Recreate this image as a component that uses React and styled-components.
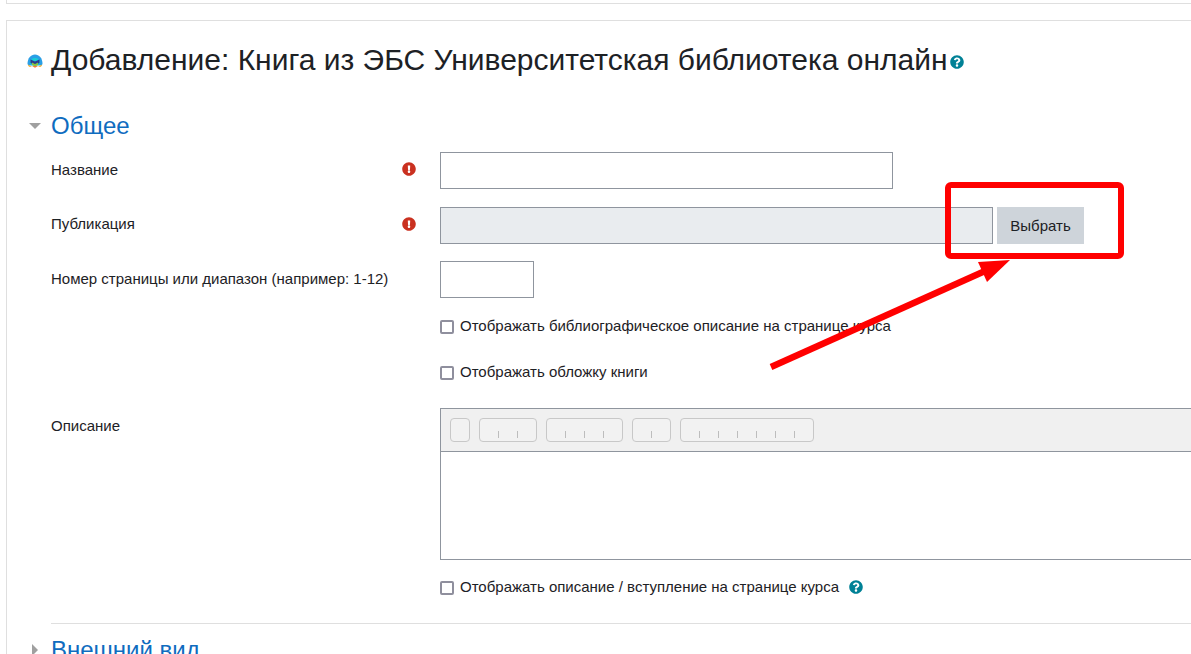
import React from 'react';
import styled, { createGlobalStyle } from 'styled-components';
import { FaQuestionCircle, FaExclamationCircle } from 'react-icons/fa';

const GlobalStyle = createGlobalStyle`
  html, body {
    margin: 0;
    padding: 0;
    background: #fff;
    overflow: hidden;
  }
  body {
    font-family: "Liberation Sans", Arial, sans-serif;
    color: #1d2125;
  }
`;

const Page = styled.div`
  position: relative;
  width: 1191px;
  height: 654px;
  overflow: hidden;
  padding-left: 6px;
  box-sizing: border-box;
`;

const TopCard = styled.div`
  width: 1300px;
  height: 4px;
  box-sizing: border-box;
  border-left: 1px solid #dfdfdf;
  border-bottom: 1px solid #dfdfdf;
`;

const MainCard = styled.main`
  width: 1300px;
  margin-top: 16px;
  box-sizing: border-box;
  border-left: 1px solid #dfdfdf;
  border-top: 1px solid #dfdfdf;
  padding: 20px 0 0 20px;
`;

const Heading = styled.div`
  display: flex;
  align-items: center;
  height: 40px;
  margin-bottom: 30px;
`;

const Title = styled.h2`
  margin: -2px 2px 0 8px;
  font-size: 30px;
  font-weight: 400;
  line-height: 40px;
  color: #1d2125;
  white-space: nowrap;
`;

const HelpIcon = styled(FaQuestionCircle)`
  width: 14px;
  height: 14px;
  color: #008196;
  flex: none;
  margin-left: ${p => p.$offset || 0}px;
  position: relative;
  top: ${p => p.$drop ?? 1}px;
`;

const SectionHeader = styled.div`
  display: flex;
  align-items: center;
  height: 30px;
  margin-top: ${p => p.$top || 0}px;
`;

const Caret = styled.span`
  flex: none;
  width: 0;
  height: 0;
  ${p => p.$open
    ? `
      margin: 0 10px 0 2px;
      border-left: 6px solid transparent;
      border-right: 6px solid transparent;
      border-top: 6px solid #a0a0a0;
    `
    : `
      margin: 0 13px 0 5px;
      border-top: 6px solid transparent;
      border-bottom: 6px solid transparent;
      border-left: 6px solid #a0a0a0;
    `}
`;

const SectionTitle = styled.h3`
  margin: 0;
  font-size: 24px;
  font-weight: 400;
  line-height: 30px;
  color: #0f6cbf;
`;

const Fields = styled.div`
  margin: 11px 0 0 24px;
`;

const Row = styled.div`
  display: grid;
  grid-template-columns: 351px 38px 1fr;
  margin-bottom: ${p => p.$gap ?? 17}px;
  min-height: ${p => p.$height || 37}px;
`;

const Label = styled.label`
  font-size: 15px;
  line-height: 22px;
  padding-top: ${p => p.$pad ?? 7}px;
  white-space: nowrap;
`;

const IconCell = styled.div`
  padding-top: 10px;
  line-height: 0;
`;

const RequiredIcon = styled(FaExclamationCircle)`
  width: 14px;
  height: 14px;
  color: #ca3120;
`;

const Control = styled.div`
  display: flex;
  gap: 4px;
  align-items: flex-start;
`;

const TextInput = styled.div`
  width: ${p => p.$width}px;
  height: 37px;
  box-sizing: border-box;
  border: 1px solid #8f959e;
  background: ${p => (p.$disabled ? '#e9ecef' : '#fff')};
`;

const PickButton = styled.button`
  width: 87px;
  height: 37px;
  padding: 0;
  border: none;
  background: #ced4da;
  color: #1d2125;
  font-family: inherit;
  font-size: 15px;
`;

const CheckLine = styled.label`
  display: flex;
  align-items: center;
  height: 22px;
  font-size: 15px;
  white-space: nowrap;
`;

const CheckText = styled.span`
  margin-top: -2px;
`;

const CheckBox = styled.span`
  flex: none;
  width: 14px;
  height: 14px;
  box-sizing: border-box;
  margin: 1px 6px 0 0;
  border: 2px solid #8f8f9d;
  border-radius: 2px;
  background: #fff;
`;

const Editor = styled.div`
  width: 900px;
  height: 152px;
  box-sizing: border-box;
  border: 1px solid #8f959e;
`;

const Toolbar = styled.div`
  display: flex;
  gap: 9px;
  height: 43px;
  box-sizing: border-box;
  padding: 9px 0 0 9px;
  background: #f0f0f0;
  border-bottom: 1px solid #8f959e;
`;

const ToolGroup = styled.div`
  display: flex;
  height: 24px;
  box-sizing: border-box;
  border: 1px solid #c8c8c8;
  border-radius: 4px;
  background: #f2f2f2;
`;

const ToolButton = styled.span`
  display: flex;
  align-items: flex-end;
  width: 19px;
  box-sizing: border-box;
  padding-bottom: 3px;
  &:not(:first-child)::before {
    content: '';
    width: 1px;
    height: 7px;
    background: #bdbdbd;
  }
  &:first-child {
    width: 18px;
  }
`;

const Divider = styled.hr`
  margin: 0 0 0 24px;
  border: none;
  border-top: 1px solid #dfdfdf;
`;

const Annotation = styled.svg`
  position: absolute;
  left: 0;
  top: 0;
  pointer-events: none;
`;

const Logo = () => (
  <svg width="16" height="14" viewBox="0 0 16 14" style={{ flex: 'none' }}>
    <path d="M0.500 10C0.500 4 4 0.500 8 0.500S15.500 4 15.500 10l-1 1.500H1.500z" fill="#2a9fe6" />
    <path d="M3 9c0-3 2.200-5 5-5s5 2 5 5l-1 2H4z" fill="#19cbd6" />
    <path d="M3.500 5.500 8 7.500l4.500-2V9L8 11 3.500 9z" fill="#2b3a8f" />
    <path d="M5 8.500 8 10l3-1.500V11l-3 1.500L5 11z" fill="#86c440" />
    <path d="M0.800 10.500 5 12.800H2zM15.200 10.500 11 12.800h3z" fill="#f7a81b" />
    <path d="M5 12h6L8 13.800z" fill="#f0783c" />
  </svg>
);

const groups = [1, 3, 4, 2, 7];

function Tools() {
  return (
    <Toolbar>
      {groups.map((count, g) => (
        <ToolGroup key={g}>
          {Array.from({ length: count }, (_, i) => (
            <ToolButton key={i} />
          ))}
        </ToolGroup>
      ))}
    </Toolbar>
  );
}

export default function App() {
  return (
    <Page>
      <GlobalStyle />
      <TopCard />
      <MainCard>
        <Heading>
          <Logo />
          <Title>Добавление: Книга из ЭБС Университетская библиотека онлайн</Title>
          <HelpIcon />
        </Heading>

        <SectionHeader>
          <Caret $open />
          <SectionTitle>Общее</SectionTitle>
        </SectionHeader>

        <Fields>
          <Row $gap={18}>
            <Label>Название</Label>
            <IconCell><RequiredIcon /></IconCell>
            <Control><TextInput $width={453} /></Control>
          </Row>
          <Row>
            <Label $pad={6}>Публикация</Label>
            <IconCell><RequiredIcon /></IconCell>
            <Control>
              <TextInput $width={553} $disabled />
              <PickButton>Выбрать</PickButton>
            </Control>
          </Row>
          <Row $gap={17}>
            <Label>Номер страницы или диапазон (например: 1-12)</Label>
            <IconCell />
            <Control><TextInput $width={94} /></Control>
          </Row>
          <Row $height={22} $gap={24}>
            <span />
            <span />
            <CheckLine>
              <CheckBox />
              <CheckText>Отображать библиографическое описание на странице курса</CheckText>
            </CheckLine>
          </Row>
          <Row $height={22} $gap={25}>
            <span />
            <span />
            <CheckLine>
              <CheckBox />
              <CheckText>Отображать обложку книги</CheckText>
            </CheckLine>
          </Row>
          <Row $height={152} $gap={16}>
            <Label>Описание</Label>
            <IconCell />
            <Editor><Tools /></Editor>
          </Row>
          <Row $height={22} $gap={25}>
            <span />
            <span />
            <CheckLine>
              <CheckBox />
              <CheckText>Отображать описание / вступление на странице курса</CheckText>
              <HelpIcon $offset={10} $drop={0} />
            </CheckLine>
          </Row>
        </Fields>

        <Divider />

        <SectionHeader $top={11}>
          <Caret />
          <SectionTitle>Внешний вид</SectionTitle>
        </SectionHeader>
      </MainCard>

      <Annotation width="1191" height="654" viewBox="0 0 1191 654">
        <rect x="948" y="185" width="173" height="71" rx="3" fill="none" stroke="#ff0000" strokeWidth="6" />
        <line x1="771" y1="367" x2="985" y2="271" stroke="#ff0000" strokeWidth="6.5" />
        <polygon points="978,262 1010,260 987,282" fill="#ff0000" />
      </Annotation>
    </Page>
  );
}
